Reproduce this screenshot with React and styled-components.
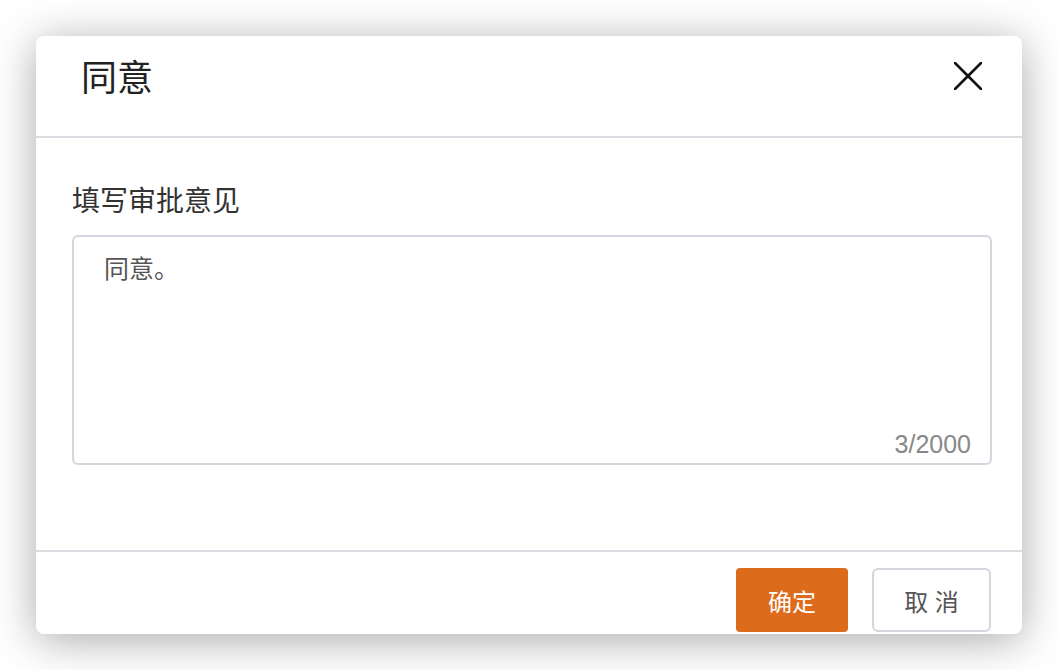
import React from "react";
import styled, { createGlobalStyle } from "styled-components";

const Global = createGlobalStyle`
  html, body { margin: 0; padding: 0; background: #ffffff; }
  body { font-family: "Liberation Sans", "Noto Sans CJK SC", sans-serif; }
  * { box-sizing: border-box; }
`;

const Page = styled.div`
  width: 1058px;
  height: 670px;
  padding: 36px;
  display: flex;
`;

const Modal = styled.div`
  width: 986px;
  height: 598px;
  background: #fff;
  border-radius: 8px;
  box-shadow: 0 6px 44px rgba(0, 0, 0, 0.34);
  display: flex;
  flex-direction: column;
  overflow: hidden;
`;

const Header = styled.div`
  height: 102px;
  flex: none;
  display: flex;
  justify-content: space-between;
  align-items: flex-start;
  padding: 21px 40px 0 45px;
  border-bottom: 2px solid #dcdce3;
`;

const Title = styled.h2`
  margin: 0;
  font-size: 36px;
  line-height: 44px;
  font-weight: 400;
  color: #222;
`;

const CloseButton = styled.button`
  margin-top: 5px;
  width: 28px;
  height: 28px;
  padding: 0;
  border: none;
  background: none;
  cursor: pointer;
  display: flex;
`;

const Body = styled.div`
  flex: 1;
  padding: 44px 31px 0 36px;
  border-bottom: 2px solid #dcdce3;
`;

const Label = styled.div`
  font-size: 28px;
  line-height: 40px;
  color: #333;
  margin-bottom: 13px;
`;

const Field = styled.div`
  position: relative;
  width: 920px;
  height: 230px;
`;

const TextArea = styled.textarea`
  width: 100%;
  height: 100%;
  resize: none;
  border: 2px solid #d5d5df;
  border-radius: 6px;
  padding: 14px 30px;
  font-family: "Liberation Sans", "Noto Sans CJK SC", sans-serif;
  font-size: 25px;
  line-height: 36px;
  color: #555;
  outline: none;
  background: #fff;
`;

const Counter = styled.span`
  position: absolute;
  right: 21px;
  bottom: 6px;
  font-size: 25px;
  line-height: 30px;
  color: #888;
`;

const Footer = styled.div`
  height: 82px;
  flex: none;
  display: flex;
  justify-content: flex-end;
  align-items: flex-start;
  gap: 24px;
  padding: 16px 31px 0 0;
`;

const Button = styled.button`
  width: ${(p) => p.$w}px;
  height: 64px;
  border-radius: ${(p) => (p.$primary ? 4 : 6)}px;
  border: ${(p) => (p.$primary ? "none" : "2px solid #d5d5df")};
  background: ${(p) => (p.$primary ? "#dc6b1b" : "#fff")};
  color: ${(p) => (p.$primary ? "#fff" : "#555")};
  font-family: "Liberation Sans", "Noto Sans CJK SC", sans-serif;
  font-size: 24px;
  padding: 0;
  cursor: pointer;
`;

export default function App() {
  return (
    <>
      <Global />
      <Page>
        <Modal>
          <Header>
            <Title>同意</Title>
            <CloseButton aria-label="关闭">
              <svg width="28" height="28" viewBox="0 0 28 28">
                <path d="M1 1 L27 27 M27 1 L1 27" stroke="#111" strokeWidth="2.6" strokeLinecap="round" />
              </svg>
            </CloseButton>
          </Header>
          <Body>
            <Label>填写审批意见</Label>
            <Field>
              <TextArea defaultValue="同意。" />
              <Counter>3/2000</Counter>
            </Field>
          </Body>
          <Footer>
            <Button $primary $w={112}>确定</Button>
            <Button $w={119}>取 消</Button>
          </Footer>
        </Modal>
      </Page>
    </>
  );
}
